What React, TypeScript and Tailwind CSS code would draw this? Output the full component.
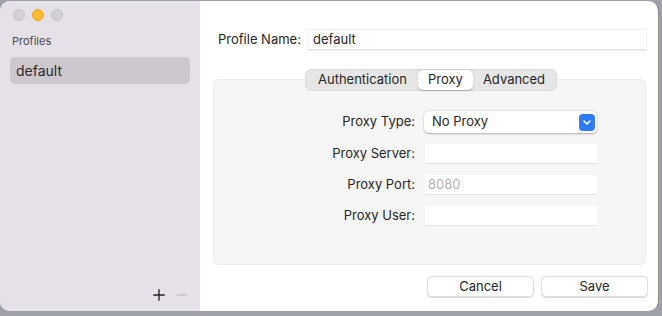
import { Plus, Minus } from 'lucide-react';

const rows = [
  { label: 'Proxy Server:', placeholder: '' },
  { label: 'Proxy Port:', placeholder: '8080' },
  { label: 'Proxy User:', placeholder: '' },
];

export default function App() {
  return (
    <div
      className="w-[662px] h-[316px] bg-[#9ea1a9] pt-px overflow-hidden"
      style={{ fontFamily: 'Inter, "Noto Sans", sans-serif' }}
    >
      <div className="w-[659px] h-[310px] rounded-[10px] overflow-hidden flex border-r border-[#8c8c90] bg-white">
        {/* Sidebar */}
        <aside className="w-[200px] shrink-0 bg-[#e6e0e8] flex flex-col px-[10px]">
          <div className="flex items-center gap-[7px] pl-[3px] pt-[8px]">
            <span className="w-3 h-3 rounded-full bg-[#d3d0d6] border border-[#c4c1c7]" />
            <span className="w-3 h-3 rounded-full bg-[#fdbc2e] border border-[#e6a722]" />
            <span className="w-3 h-3 rounded-full bg-[#d3d0d6] border border-[#c4c1c7]" />
          </div>
          <div className="text-[11px] text-[#4d4a50] pl-[2px] mt-[12px]">Profiles</div>
          <div className="mt-[7px] h-[27px] rounded-[5px] bg-[#cdc8cf] flex items-center pl-[6px] text-[14px] text-[#2b2a2d]">
            default
          </div>
          <div className="flex-1" />
          <div className="flex justify-end items-center gap-[6px] pb-[7px] text-[#222]">
            <Plus size={18} strokeWidth={1.8} />
            <Minus size={16} strokeWidth={1.2} className="text-[#a9a6ac]" />
          </div>
        </aside>

        {/* Main */}
        <main className="flex-1 flex flex-col pl-[13px] pr-[10px] text-[13px] text-[#262626]">
          <div className="flex items-center mt-[29px] pl-[5px] pr-[2px]">
            <span className="w-[90px] whitespace-nowrap">Profile Name:</span>
            <div className="flex-1 h-[20px] border-b border-[#e2e2e2] shadow-[0_0_0_1px_#f0f0f0] flex items-center pl-[5px]">
              default
            </div>
          </div>

          <div className="relative mt-[29px] mr-[2px] h-[186px] rounded-[6px] bg-[#f6f6f6] border border-[#ececec]">
            <div className="absolute -top-[11px] left-[91px] flex items-center h-[22px] rounded-[6px] bg-[#e6e6e6] border border-[#dadada] p-[1px]">
              <span className="px-[11px]">Authentication</span>
              <span className="px-[10px] h-[20px] flex items-center rounded-[5px] bg-white shadow-[0_0.5px_1.5px_rgba(0,0,0,0.25)]">
                Proxy
              </span>
              <span className="px-[10px]">Advanced</span>
            </div>

            <div className="flex flex-col mt-[31px] pl-[110px]">
              <div className="flex items-center h-[22px]">
                <span className="w-[100px] text-right pr-[9px] whitespace-nowrap">Proxy Type:</span>
                <div className="w-[173px] h-[22px] rounded-[5px] bg-white shadow-[0_0.5px_2px_rgba(0,0,0,0.3)] flex items-center justify-between pl-[8px] pr-[2px]">
                  <span>No Proxy</span>
                  <span className="w-[16px] h-[17px] rounded-[4px] bg-[#2f7cf6] flex items-center justify-center">
                    <svg width="8" height="5" viewBox="0 0 8 5" fill="none">
                      <path d="M1 1l3 3 3-3" stroke="white" strokeWidth="1.5" strokeLinecap="round" strokeLinejoin="round" />
                    </svg>
                  </span>
                </div>
              </div>
              {rows.map((r) => (
                <div key={r.label} className="flex items-center h-[20px] mt-[11px]">
                  <span className="w-[100px] text-right pr-[9px] whitespace-nowrap">{r.label}</span>
                  <div className="w-[172px] h-[20px] ml-px bg-white border-b border-[#e4e4e4] flex items-center pl-[3px] text-[#b5b5b5]">
                    {r.placeholder}
                  </div>
                </div>
              ))}
            </div>
          </div>

          <div className="flex justify-end gap-[7px] mt-[11px]">
            <button className="w-[107px] h-[21px] rounded-[5px] bg-white border border-[#e0e0e0] shadow-[0_0.5px_1px_rgba(0,0,0,0.15)] text-[13px] text-[#262626]">
              Cancel
            </button>
            <button className="w-[107px] h-[21px] rounded-[5px] bg-white border border-[#e0e0e0] shadow-[0_0.5px_1px_rgba(0,0,0,0.15)] text-[13px] text-[#262626]">
              Save
            </button>
          </div>
        </main>
      </div>
    </div>
  );
}
